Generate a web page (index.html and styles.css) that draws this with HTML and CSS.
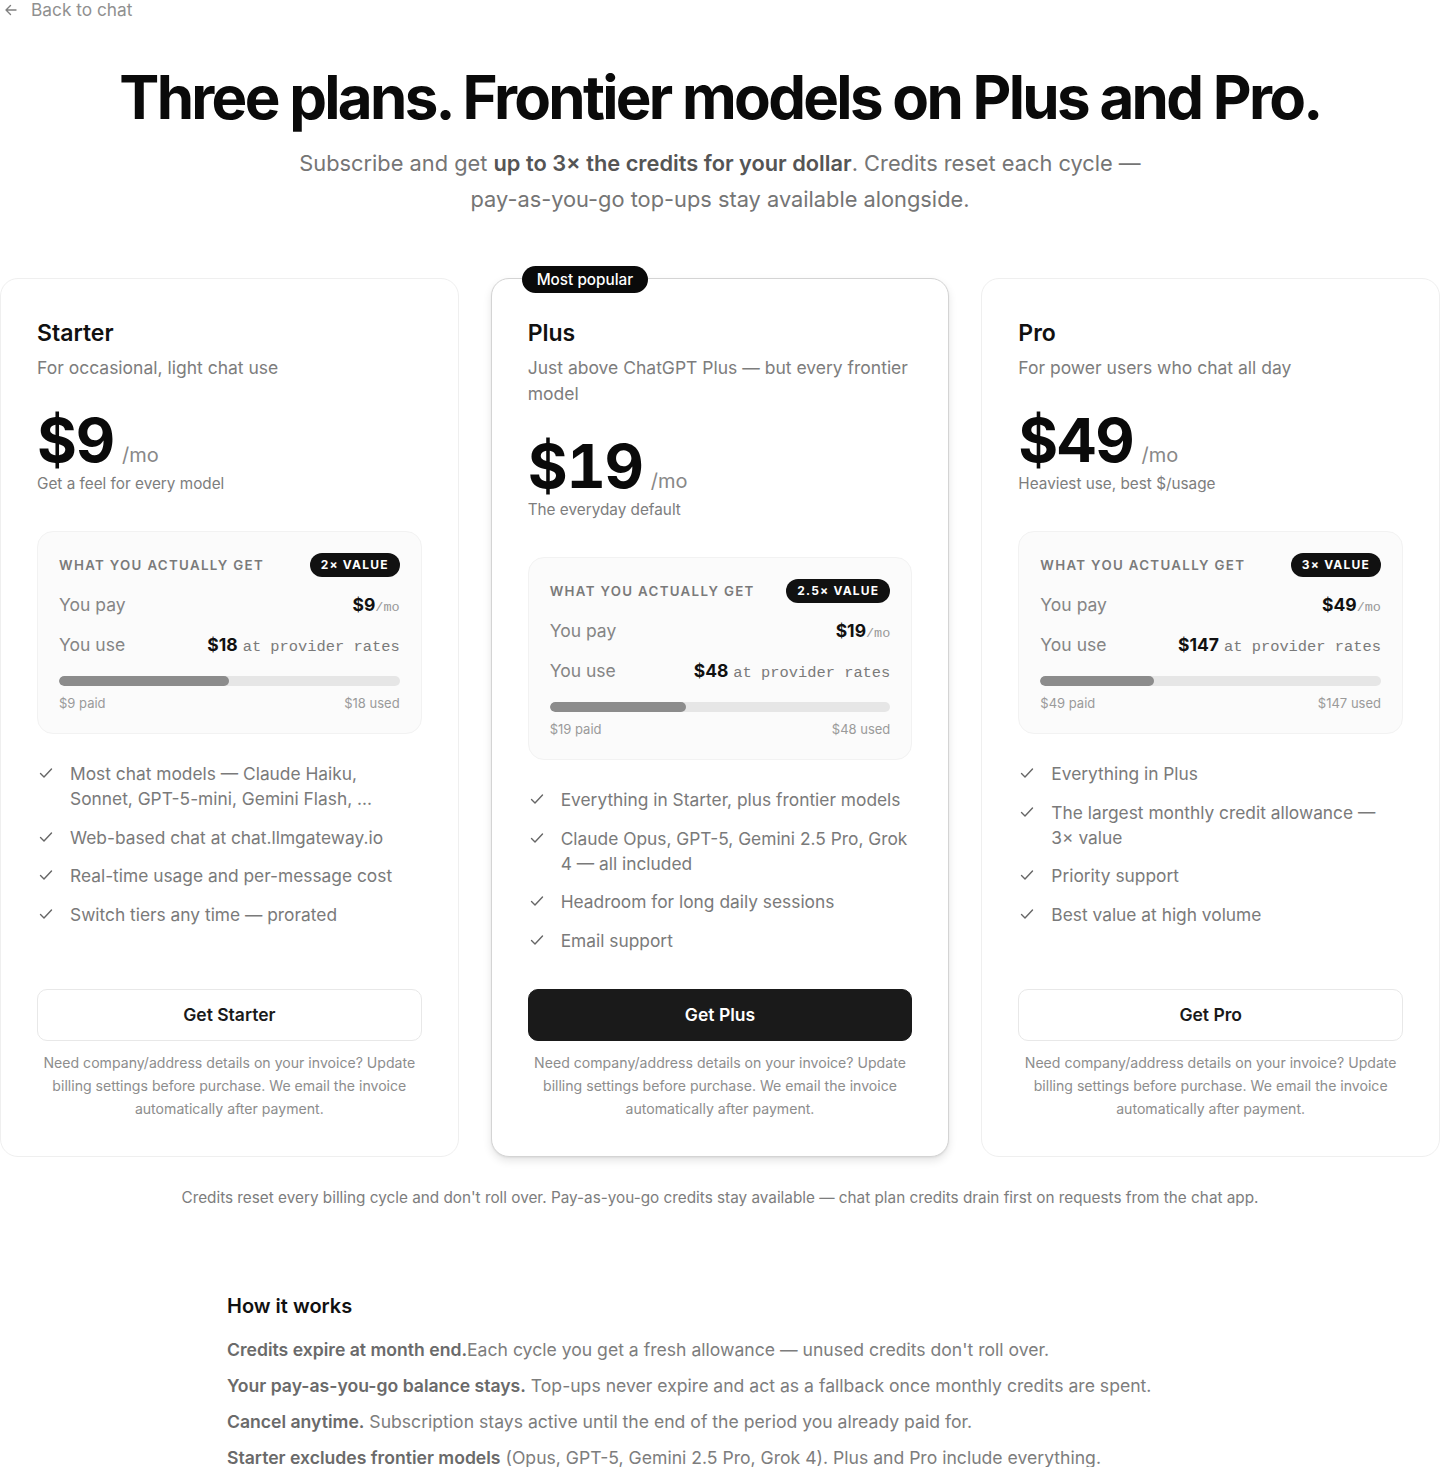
FILE: index.html
```html
<!DOCTYPE html>
<html lang="en">
<head>
<meta charset="utf-8">
<title>Plans</title>
<link rel="stylesheet" href="styles.css">
</head>
<body>
<div class="page">
  <a class="back" href="#">
    <svg class="back-icon" viewBox="0 0 16 16" width="16" height="16"><path d="M13 8H3M7.5 3.5L3 8l4.5 4.5" fill="none" stroke="currentColor" stroke-width="1.4" stroke-linecap="round" stroke-linejoin="round"/></svg>
    <span>Back to chat</span>
  </a>

  <h1 class="title">Three plans. Frontier models on Plus and Pro.</h1>
  <p class="subtitle">Subscribe and get <strong>up to 3× the credits for your dollar</strong>. Credits reset each cycle — pay-as-you-go top-ups stay available alongside.</p>

  <div class="plans">
    <section class="card">
      <h2 class="plan-name">Starter</h2>
      <p class="plan-desc">For occasional, light chat use</p>
      <div class="price"><span class="amount">$9</span><span class="per">/mo</span></div>
      <p class="tagline">Get a feel for every model</p>
      <div class="value-box">
        <div class="vb-head"><span class="vb-label">WHAT YOU ACTUALLY GET</span><span class="vb-badge">2× VALUE</span></div>
        <div class="vb-row"><span class="vb-key">You pay</span><span class="vb-val"><b>$9</b><span class="mono-sm">/mo</span></span></div>
        <div class="vb-row"><span class="vb-key">You use</span><span class="vb-val"><b>$18</b> <span class="mono">at provider rates</span></span></div>
        <div class="bar"><div class="bar-fill" style="width:50%"></div></div>
        <div class="bar-labels"><span>$9 paid</span><span>$18 used</span></div>
      </div>
      <ul class="features">
        <li><svg class="check" viewBox="0 0 16 16"><path d="M2.5 8.5l3.5 3.5 7.5-8"/></svg><span>Most chat models — Claude Haiku, Sonnet, GPT-5-mini, Gemini Flash, …</span></li>
        <li><svg class="check" viewBox="0 0 16 16"><path d="M2.5 8.5l3.5 3.5 7.5-8"/></svg><span>Web-based chat at chat.llmgateway.io</span></li>
        <li><svg class="check" viewBox="0 0 16 16"><path d="M2.5 8.5l3.5 3.5 7.5-8"/></svg><span>Real-time usage and per-message cost</span></li>
        <li><svg class="check" viewBox="0 0 16 16"><path d="M2.5 8.5l3.5 3.5 7.5-8"/></svg><span>Switch tiers any time — prorated</span></li>
      </ul>
      <button class="btn">Get Starter</button>
      <p class="fine">Need company/address details on your invoice? Update billing settings before purchase. We email the invoice automatically after payment.</p>
    </section>

    <section class="card card-featured">
      <span class="popular">Most popular</span>
      <h2 class="plan-name">Plus</h2>
      <p class="plan-desc">Just above ChatGPT Plus — but every frontier model</p>
      <div class="price"><span class="amount">$19</span><span class="per">/mo</span></div>
      <p class="tagline">The everyday default</p>
      <div class="value-box">
        <div class="vb-head"><span class="vb-label">WHAT YOU ACTUALLY GET</span><span class="vb-badge">2.5× VALUE</span></div>
        <div class="vb-row"><span class="vb-key">You pay</span><span class="vb-val"><b>$19</b><span class="mono-sm">/mo</span></span></div>
        <div class="vb-row"><span class="vb-key">You use</span><span class="vb-val"><b>$48</b> <span class="mono">at provider rates</span></span></div>
        <div class="bar"><div class="bar-fill" style="width:40%"></div></div>
        <div class="bar-labels"><span>$19 paid</span><span>$48 used</span></div>
      </div>
      <ul class="features">
        <li><svg class="check" viewBox="0 0 16 16"><path d="M2.5 8.5l3.5 3.5 7.5-8"/></svg><span>Everything in Starter, plus frontier models</span></li>
        <li><svg class="check" viewBox="0 0 16 16"><path d="M2.5 8.5l3.5 3.5 7.5-8"/></svg><span>Claude Opus, GPT-5, Gemini 2.5 Pro, Grok 4 — all included</span></li>
        <li><svg class="check" viewBox="0 0 16 16"><path d="M2.5 8.5l3.5 3.5 7.5-8"/></svg><span>Headroom for long daily sessions</span></li>
        <li><svg class="check" viewBox="0 0 16 16"><path d="M2.5 8.5l3.5 3.5 7.5-8"/></svg><span>Email support</span></li>
      </ul>
      <button class="btn btn-dark">Get Plus</button>
      <p class="fine">Need company/address details on your invoice? Update billing settings before purchase. We email the invoice automatically after payment.</p>
    </section>

    <section class="card">
      <h2 class="plan-name">Pro</h2>
      <p class="plan-desc">For power users who chat all day</p>
      <div class="price"><span class="amount">$49</span><span class="per">/mo</span></div>
      <p class="tagline">Heaviest use, best $/usage</p>
      <div class="value-box">
        <div class="vb-head"><span class="vb-label">WHAT YOU ACTUALLY GET</span><span class="vb-badge">3× VALUE</span></div>
        <div class="vb-row"><span class="vb-key">You pay</span><span class="vb-val"><b>$49</b><span class="mono-sm">/mo</span></span></div>
        <div class="vb-row"><span class="vb-key">You use</span><span class="vb-val"><b>$147</b> <span class="mono">at provider rates</span></span></div>
        <div class="bar"><div class="bar-fill" style="width:33.3%"></div></div>
        <div class="bar-labels"><span>$49 paid</span><span>$147 used</span></div>
      </div>
      <ul class="features">
        <li><svg class="check" viewBox="0 0 16 16"><path d="M2.5 8.5l3.5 3.5 7.5-8"/></svg><span>Everything in Plus</span></li>
        <li><svg class="check" viewBox="0 0 16 16"><path d="M2.5 8.5l3.5 3.5 7.5-8"/></svg><span>The largest monthly credit allowance — 3×&nbsp;value</span></li>
        <li><svg class="check" viewBox="0 0 16 16"><path d="M2.5 8.5l3.5 3.5 7.5-8"/></svg><span>Priority support</span></li>
        <li><svg class="check" viewBox="0 0 16 16"><path d="M2.5 8.5l3.5 3.5 7.5-8"/></svg><span>Best value at high volume</span></li>
      </ul>
      <button class="btn">Get Pro</button>
      <p class="fine">Need company/address details on your invoice? Update billing settings before purchase. We email the invoice automatically after payment.</p>
    </section>
  </div>

  <p class="note">Credits reset every billing cycle and don't roll over. Pay-as-you-go credits stay available — chat plan credits drain first on requests from the chat app.</p>

  <section class="how">
    <h3 class="how-title">How it works</h3>
    <p><b>Credits expire at month end.</b>Each cycle you get a fresh allowance — unused credits don't roll over.</p>
    <p><b>Your pay-as-you-go balance stays.</b> Top-ups never expire and act as a fallback once monthly credits are spent.</p>
    <p><b>Cancel anytime.</b> Subscription stays active until the end of the period you already paid for.</p>
    <p><b>Starter excludes frontier models</b> (Opus, GPT-5, Gemini 2.5 Pro, Grok 4). Plus and Pro include everything.</p>
  </section>
</div>
</body>
</html>
```

FILE: styles.css
```css
* { box-sizing: border-box; }
html, body { margin: 0; padding: 0; background: #fff; }
body {
  font-family: Inter, "Noto Sans", Roboto, sans-serif;
  color: #111;
}
.page {
  width: 1440px;
  height: 1467px;
  overflow: hidden;
}
.back {
  display: flex;
  align-items: center;
  gap: 12px;
  height: 20px;
  padding-left: 3px;
  color: #909090;
  text-decoration: none;
  font-size: 17.3px;
  line-height: 20px;
}
.back-icon { color: #808080; }

.title {
  margin: 44px 0 0;
  text-align: center;
  font-size: 60px;
  line-height: 66px;
  font-weight: 700;
  letter-spacing: -0.045em;
  color: #0a0a0a;
}
.subtitle {
  margin: 15px auto 0;
  max-width: 880px;
  text-align: center;
  font-size: 21.8px;
  line-height: 36px;
  color: #757575;
}
.subtitle strong { color: #555; font-weight: 600; }

.plans {
  margin-top: 61px;
  display: grid;
  grid-template-columns: repeat(3, 1fr);
  gap: 32px;
}
.card {
  position: relative;
  display: flex;
  flex-direction: column;
  padding: 40px 36px 36px;
  border: 1px solid #efefef;
  border-radius: 18px;
  background: #fff;
}
.card-featured {
  border-color: #d4d4d4;
  box-shadow: 0 4px 8px rgba(0,0,0,0.10), 0 1px 2px rgba(0,0,0,0.06);
}
.popular {
  position: absolute;
  top: -13px;
  left: 30px;
  height: 27px;
  padding: 0 15px;
  border-radius: 14px;
  background: #0a0a0a;
  color: #fff;
  font-size: 15.3px;
  line-height: 27px;
  font-weight: 500;
}
.plan-name {
  margin: 0;
  font-size: 23px;
  line-height: 28px;
  font-weight: 600;
  color: #111;
}
.plan-desc {
  margin: 8px 0 0;
  font-size: 17.5px;
  line-height: 26px;
  color: #7d7d7d;
}
.price {
  margin-top: 28px;
  display: flex;
  align-items: baseline;
  gap: 8px;
  height: 62px;
}
.amount {
  font-size: 61px;
  line-height: 62px;
  font-weight: 700;
  letter-spacing: -0.02em;
  font-variant-numeric: tabular-nums;
  color: #0a0a0a;
}
.per {
  font-size: 20px;
  line-height: 24px;
  color: #888;
}
.tagline {
  margin: 3px 0 0;
  font-size: 15.3px;
  line-height: 20px;
  color: #7d7d7d;
}
.value-box {
  margin-top: 37px;
  padding: 21px 21px 22px;
  border: 1px solid #f2f2f2;
  border-radius: 16px;
  background: #fbfbfb;
}
.vb-head {
  display: flex;
  align-items: center;
  justify-content: space-between;
  height: 24px;
}
.vb-label {
  font-size: 13.3px;
  font-weight: 600;
  letter-spacing: 0.1em;
  color: #7a7a7a;
}
.vb-badge {
  height: 24px;
  padding: 0 11px;
  border-radius: 12px;
  background: #111;
  color: #fff;
  font-size: 12px;
  line-height: 24px;
  font-weight: 700;
  letter-spacing: 0.1em;
}
.vb-row {
  display: flex;
  align-items: baseline;
  justify-content: space-between;
  height: 24px;
  margin-top: 16px;
  font-size: 17.5px;
  line-height: 24px;
}
.vb-key { color: #858585; }
.vb-val b { font-weight: 700; color: #111; }
.mono {
  font-family: "Liberation Mono", "DejaVu Sans Mono", monospace;
  font-size: 15.4px;
  color: #7a7a7a;
}
.mono-sm {
  font-family: "Liberation Mono", "DejaVu Sans Mono", monospace;
  font-size: 13.5px;
  color: #999;
}
.bar {
  margin-top: 19px;
  height: 10px;
  border-radius: 5px;
  background: #e6e6e6;
  overflow: hidden;
}
.bar-fill {
  height: 100%;
  border-radius: 5px;
  background: #8c8c8c;
}
.bar-labels {
  display: flex;
  justify-content: space-between;
  margin-top: 9px;
  font-size: 13px;
  line-height: 16px;
  color: #9a9a9a;
}
.features {
  list-style: none;
  margin: 27px 0 36px;
  padding: 0;
  display: flex;
  flex-direction: column;
  gap: 13.5px;
}
.features li {
  display: flex;
  gap: 16px;
  font-size: 17.35px;
  line-height: 25px;
  color: #7a7a7a;
}
.check {
  flex: none;
  width: 16px;
  height: 16px;
  margin-top: 4px;
  margin-left: 1px;
  fill: none;
  stroke: #666;
  stroke-width: 1.4;
  stroke-linecap: round;
  stroke-linejoin: round;
}
.btn {
  margin-top: auto;
  height: 52px;
  width: 100%;
  border: 1px solid #e8e8e8;
  border-radius: 10px;
  background: #fff;
  font-family: inherit;
  font-size: 17.5px;
  font-weight: 600;
  color: #1a1a1a;
}
.btn-dark {
  background: #1a1a1a;
  border-color: #1a1a1a;
  color: #fff;
}
.fine {
  margin: 10px 0 0;
  text-align: center;
  font-size: 14.1px;
  line-height: 23px;
  color: #8d8d8d;
}
.note {
  margin: 31px 0 0;
  text-align: center;
  font-size: 15.3px;
  line-height: 20px;
  color: #7d7d7d;
}
.how {
  width: 986px;
  margin: 84px auto 0;
}
.how-title {
  margin: 0;
  font-size: 20px;
  line-height: 28px;
  font-weight: 600;
  color: #111;
}
.how p {
  margin: 12px 0 0;
  font-size: 17.6px;
  line-height: 24px;
  color: #7d7d7d;
}
.how p:first-of-type { margin-top: 18px; }
.how p b { font-weight: 600; color: #6a6a6a; }
```
